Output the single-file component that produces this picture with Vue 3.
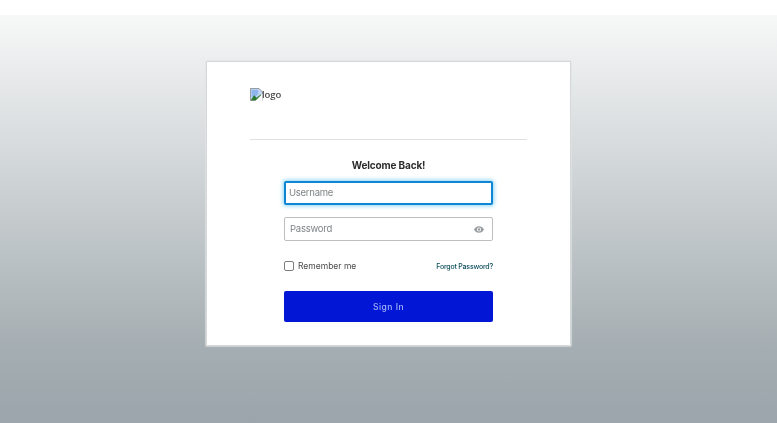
<script setup>
const title = 'Welcome Back!'
</script>

<template>
  <div class="page">
    <div class="top-strip"></div>
    <main class="backdrop">
      <section class="card">
        <div class="logo">
          <svg class="broken-img" width="13" height="13" viewBox="0 0 16 16" aria-hidden="true">
            <path d="M0.500 0.500H11L15.500 5V15.500H0.500Z" fill="#c3d5f2" stroke="#7d8287" />
            <path d="M2 2h8v5l-3 4H2Z" fill="#8fb6ec" />
            <path d="M1 15l4-6 3 3 5-4 2 2v5Z" fill="#2b7a2f" />
            <path d="M7 15.500L15.500 7V16H7Z" fill="#fff" />
          </svg>
          <span>logo</span>
        </div>
        <hr class="divider" />
        <h1 class="title">{{ title }}</h1>
        <form class="form" @submit.prevent>
          <div class="field focused"><span class="placeholder">Username</span></div>
          <div class="field">
            <span class="placeholder">Password</span>
            <svg class="eye" width="10" height="7" viewBox="0 0 24 16" aria-hidden="true">
              <path d="M12 0C6.500 0 2 3.300 0 8c2 4.700 6.500 8 12 8s10-3.300 12-8c-2-4.700-6.500-8-12-8Zm0 13a5 5 0 1 1 0-10 5 5 0 0 1 0 10Zm0-8a3 3 0 1 0 0 6 3 3 0 0 0 0-6Z" fill="#9a9d9f" />
            </svg>
          </div>
          <div class="options">
            <label class="remember"><span class="box"></span>Remember me</label>
            <a class="forgot" href="#">Forgot Password?</a>
          </div>
          <button class="submit" type="submit">Sign In</button>
        </form>
      </section>
    </main>
  </div>
</template>

<style>
html, body {
  margin: 0;
  background: #fff;
}
</style>

<style scoped>
.page {
  width: 777px;
  height: 423px;
  overflow: hidden;
  display: flex;
  flex-direction: column;
  font-family: Inter, "Open Sans", "Liberation Sans", sans-serif;
}

.top-strip {
  height: 15px;
  background: #fff;
}

.backdrop {
  flex: 1;
  display: flex;
  justify-content: center;
  align-items: flex-start;
  padding-top: 46px;
  background: linear-gradient(#f7f8f8 0%, #a4adb1 82%, #9ca5ab 100%);
}

.card {
  box-sizing: border-box;
  width: 365px;
  height: 285px;
  padding: 26px 43px 0;
  background: #fff;
  border: 1px solid #d4d8d9;
  border-radius: 1px;
  box-shadow: 0 0 1px 1px rgba(225, 228, 229, 0.7);
  filter: blur(0.35px);
}

.logo {
  display: flex;
  align-items: flex-start;
  height: 51px;
  font-family: "Open Sans", sans-serif;
  font-size: 9.500px;
  font-weight: 600;
  line-height: 13px;
  letter-spacing: -0.1px;
  color: #4a4a4a;
}

.broken-img {
  flex: none;
  margin-right: -1px;
}

.divider {
  height: 1px;
  margin: 0;
  border: 0;
  background: #dde1e2;
}

.title {
  margin: 18px 0 0;
  font-size: 10px;
  line-height: 15px;
  font-weight: 700;
  letter-spacing: -0.15px;
  text-align: center;
  color: #2d2d2d;
}

.form {
  width: 209px;
  margin: 8px auto 0;
}

.field {
  box-sizing: border-box;
  height: 24px;
  margin-bottom: 12px;
  padding: 0 8px 0 5px;
  display: flex;
  align-items: center;
  justify-content: space-between;
  background: #fff;
  border: 1px solid #bcbfc1;
  border-radius: 2px;
}

.field.focused {
  border: 2px solid #0f86d4;
  padding-left: 3px;
  box-shadow: 0 0 4px 1px #8ad3f4;
}

.placeholder {
  position: relative;
  top: -1px;
  font-size: 9.500px;
  letter-spacing: -0.25px;
  color: #7f8386;
}

.options {
  height: 16px;
  margin-top: 17px;
  display: flex;
  align-items: center;
  justify-content: space-between;
}

.remember {
  display: flex;
  align-items: center;
  gap: 4px;
  font-size: 8.500px;
  color: #4a4a4a;
}

.box {
  box-sizing: border-box;
  width: 10px;
  height: 10px;
  border: 1.500px solid #7d7f80;
  border-radius: 2px;
}

.forgot {
  font-size: 7px;
  letter-spacing: -0.2px;
  font-weight: 500;
  color: #0e4f5c;
  text-decoration: none;
}

.submit {
  display: block;
  width: 100%;
  height: 31px;
  margin-top: 17px;
  padding: 0;
  border: 0;
  border-radius: 2px;
  background: #0217d6;
  color: #a3b3f6;
  font-family: inherit;
  font-size: 8.500px;
  font-weight: 500;
  letter-spacing: 0.5px;
}
</style>
